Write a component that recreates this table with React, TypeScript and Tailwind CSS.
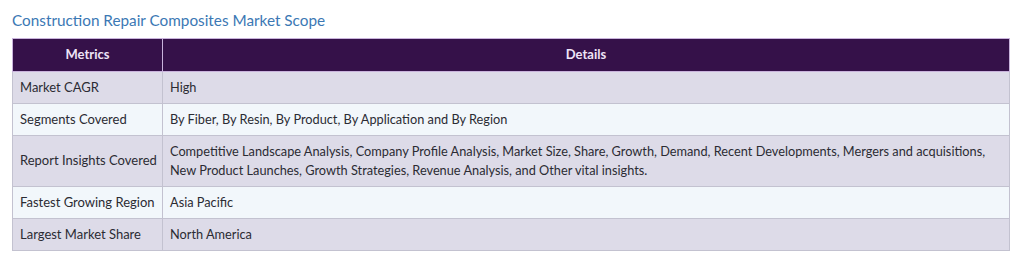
import React from "react";

const rows: [string, React.ReactNode][] = [
  ["Market CAGR", "High"],
  ["Segments Covered", "By Fiber, By Resin, By Product, By Application and By Region"],
  [
    "Report Insights Covered",
    <>
      Competitive Landscape Analysis, Company Profile Analysis, Market Size, Share, Growth, Demand, Recent Developments, Mergers and acquisitions,
      <br />
      New Product Launches, Growth Strategies, Revenue Analysis, and Other vital insights.
    </>,
  ],
  ["Fastest Growing Region", "Asia Pacific"],
  ["Largest Market Share", "North America"],
];

export default function App() {
  return (
    <div className="w-[1024px] h-[268px] bg-white pt-[10px] pl-[12px]" style={{ fontFamily: "Lato, 'Open Sans', sans-serif" }}>
      <h2 className="text-[15.3px] leading-[20px] text-[#3b78b4] mb-[8px]">Construction Repair Composites Market Scope</h2>
      <table className="w-[998px] table-fixed border-collapse text-[13px] text-[#2b2b33]">
        <colgroup>
          <col className="w-[150px]" />
          <col />
        </colgroup>
        <thead>
          <tr className="bg-[#351149] h-[33px]">
            <th className="border border-[#c9b3dc] text-[#eee4f7] font-bold text-center">Metrics</th>
            <th className="border border-[#c9b3dc] text-[#eee4f7] font-bold text-center">Details</th>
          </tr>
        </thead>
        <tbody>
          {rows.map(([k, v], i) => (
            <tr key={i} className={i % 2 === 0 ? "bg-[#dddbe8]" : "bg-[#f2f7fb]"}>
              <td className={`border border-[#c3c2d0] pl-[7px] pr-0 whitespace-nowrap ${i === 2 ? "h-[51px]" : "h-[32px]"}`}>{k}</td>
              <td className="border border-[#c3c2d0] px-[7px] leading-[19px] text-[12.75px]">{v}</td>
            </tr>
          ))}
        </tbody>
      </table>
    </div>
  );
}
